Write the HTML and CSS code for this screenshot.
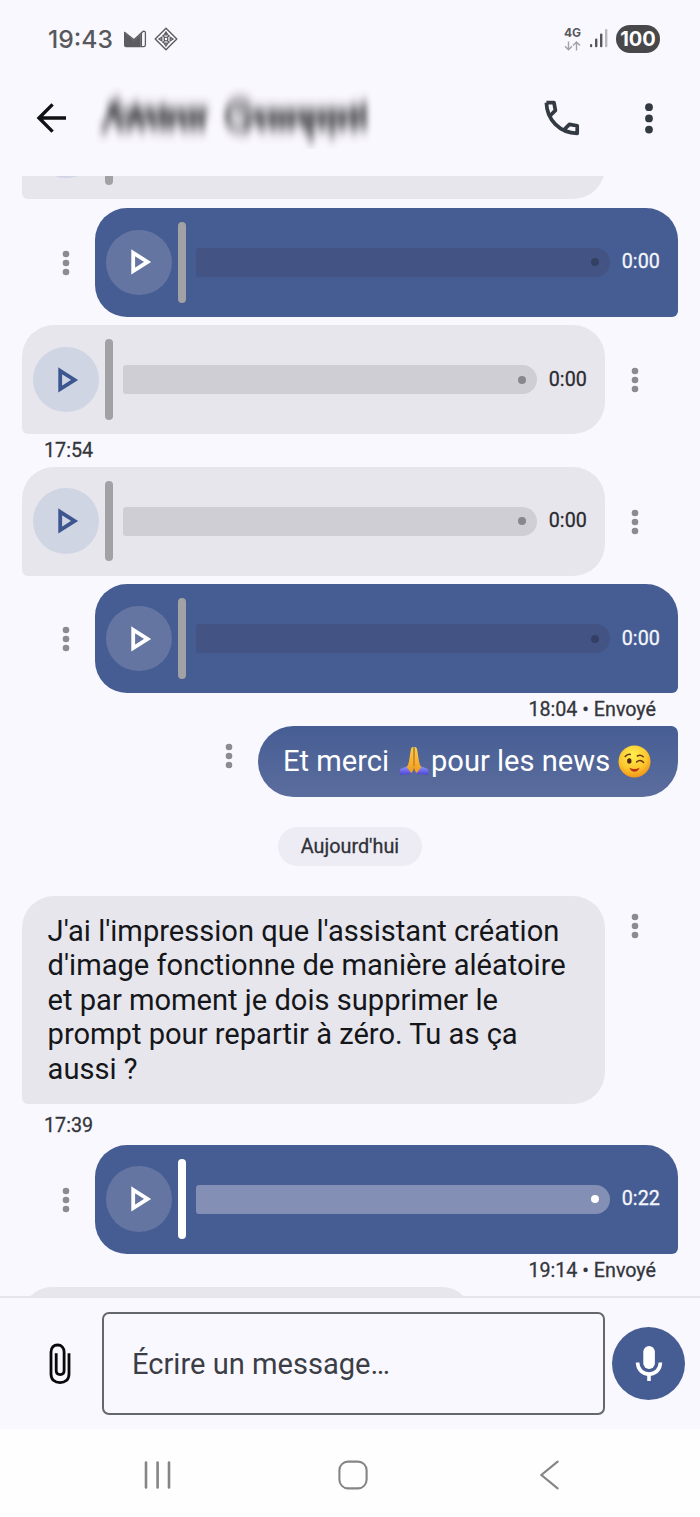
FILE: index.html
```
<!DOCTYPE html>
<html lang="fr">
<head>
<meta charset="utf-8">
<title>Messages</title>
<link rel="stylesheet" href="styles.css">
</head>
<body>
<svg width="0" height="0" class="defs">
  <defs>
    <symbol id="dots" viewBox="0 0 8 26"><circle cx="4" cy="4" r="3.3"/><circle cx="4" cy="13" r="3.3"/><circle cx="4" cy="22" r="3.3"/></symbol>
    <symbol id="play" viewBox="0 0 22 28"><path d="M3.2 4.8 L17.6 13.9 L3.2 23 Z" fill="none" stroke="currentColor" stroke-width="3.8"/></symbol>
  </defs>
</svg>
<div class="screen">
  <header class="status">
    <span class="clock">19:43</span>
    <svg class="mail" width="24" height="18" viewBox="0 0 24 18"><path d="M1 2.2 L11 10.5 L17.8 4.3 V17.3 H3 Q1 17.3 1 15.3 Z" fill="#5c5c61"/><path d="M1.2 2 L11 9.8 L20 1.4 Q22.4 0.8 22.4 3 V15 Q22.4 16.7 20.6 16.7 H18.4 V3" fill="none" stroke="#5c5c61" stroke-width="1.3"/></svg>
    <svg class="diamond" width="24" height="24" viewBox="0 0 24 24" fill="none" stroke="#5c5c61"><path d="M12 1.2 L22.8 12 L12 22.8 L1.2 12 Z" stroke-width="1.4" stroke-linejoin="round"/><path d="M12 5 L13.8 7.8 H10.2Z M12 19 L13.8 16.2 H10.2Z M5 12 L7.8 10.2 V13.8Z M19 12 L16.2 10.2 V13.8Z M8.6 8.2 L11 11 M15.4 8.2 L13 11 M8.6 15.8 L11 13 M15.4 15.8 L13 13 M12 9.5 V11 M12 13 V14.5 M9.5 12 H11 M13 12 H14.5" stroke-width="1.3"/></svg>
    <div class="net">
      <span class="g4">4G</span>
      <svg width="17" height="10" viewBox="0 0 17 10" fill="none" stroke="#a2a1a8" stroke-width="1.4"><path d="M4.5 0.5 V8.5 M1 5.2 L4.5 8.7 L8 5.2 M12.5 9.5 V1.2 M9 4.6 L12.5 1.1 L16 4.6"/></svg>
    </div>
    <svg class="signal" width="18" height="19" viewBox="0 0 18 19"><g fill="#55555a"><rect x="0" y="15" width="2.2" height="3.2" rx="1"/><rect x="5" y="9.5" width="2.4" height="8.7" rx="1"/><rect x="10" y="4.5" width="2.4" height="13.7" rx="1"/></g><rect x="15" y="0" width="2.4" height="18.2" rx="1" fill="#b9b8bf"/></svg>
    <span class="battery">100</span>
  </header>
  <div class="appbar">
    <svg class="back" width="31" height="30" viewBox="0 0 31 30" fill="none" stroke="#101114" stroke-width="3.4"><path d="M30 15 H3 M16.6 1.4 L3 15 L16.6 28.6"/></svg>
    <svg class="contact" width="290" height="62" viewBox="0 0 290 62">
      <defs><filter id="smudge" x="-10%" y="-50%" width="120%" height="200%" color-interpolation-filters="sRGB"><feGaussianBlur stdDeviation="3.4 6.5"/></filter></defs>
      <g filter="url(#smudge)" fill="none" stroke="#2a2a2d" stroke-width="4.6" opacity="0.9">
        <path d="M7 45 L24 12 M15 16 L27 44 M33 44 L41 21 L48 44 M53 20 L60 43 M68 18 V44 M76 22 V44 M85 22 L90 44 M98 21 V44 M107 21 V44 M12 24 H114 M20 33 H110"/>
        <path d="M155 17 Q136 9 132 28 Q132 44 152 42 V30 M162 22 L168 44 M178 22 V44 M187 23 V44 M196 22 V44 M206 22 L211 44 M216 22 V54 M227 22 V44 M237 21 V50 M247 22 V44 M259 18 V45 M269 15 V43 M140 25 H270 M152 34 H266"/>
      </g>
    </svg>
    <svg class="phone" width="36" height="36" viewBox="0 0 36 36" fill="none" stroke="#343a42" stroke-width="3.7" stroke-linejoin="round"><path d="M2.4 2.6 H10 L11.4 10.4 L6.6 15.2 M2.4 2.6 C2.8 20 16 33 33.2 33.4 V25.8 L25.4 24.4 L20.8 29"/></svg>
    <svg class="more" width="8" height="31" viewBox="0 0 8 31" fill="#343a42"><circle cx="4" cy="4.2" r="3.9"/><circle cx="4" cy="15.4" r="3.9"/><circle cx="4" cy="26.6" r="3.9"/></svg>
  </div>

  <main class="chat">
    <div class="row clipped">
      <div class="voice in"><i class="disc"></i><i class="needle"></i></div>
    </div>
    <div class="row out first">
      <svg class="kebab"><use href="#dots"/></svg>
      <div class="voice sent"><span class="disc"><svg><use href="#play"/></svg></span><i class="needle"></i><span class="track"><i></i></span><span class="len">0:00</span></div>
    </div>
    <div class="row">
      <div class="voice in"><span class="disc"><svg><use href="#play"/></svg></span><i class="needle"></i><span class="track"><i></i></span><span class="len">0:00</span></div>
      <svg class="kebab"><use href="#dots"/></svg>
    </div>
    <div class="meta">17:54</div>
    <div class="row">
      <div class="voice in"><span class="disc"><svg><use href="#play"/></svg></span><i class="needle"></i><span class="track"><i></i></span><span class="len">0:00</span></div>
      <svg class="kebab"><use href="#dots"/></svg>
    </div>
    <div class="row out">
      <svg class="kebab"><use href="#dots"/></svg>
      <div class="voice sent"><span class="disc"><svg><use href="#play"/></svg></span><i class="needle"></i><span class="track"><i></i></span><span class="len">0:00</span></div>
    </div>
    <div class="meta right">18:04 • Envoyé</div>
    <div class="row out textrow">
      <svg class="kebab"><use href="#dots"/></svg>
      <div class="bubble-sent">
        <span class="t1">Et merci</span>
        <svg class="pray" width="30" height="30" viewBox="0 0 30 30">
          <defs><linearGradient id="hand" x1="0" y1="0" x2="0" y2="1"><stop offset="0" stop-color="#fbd04a"/><stop offset="1" stop-color="#f39a1b"/></linearGradient><linearGradient id="cuff" x1="0" y1="0" x2="0" y2="1"><stop offset="0" stop-color="#8f9bf8"/><stop offset="1" stop-color="#4f3fd6"/></linearGradient></defs>
          <path d="M1 23 L9 20 L14 26 Q11 29.4 7 28 L1.4 29 Q0 25.5 1 23Z M29 23 L21 20 L16 26 Q19 29.4 23 28 L28.6 29 Q30 25.5 29 23Z" fill="url(#cuff)"/>
          <path d="M14.6 1 Q12.2 0.6 11.8 4 L10.2 14 Q9.6 18.4 7.8 21 L12.2 27 Q15 25 15 20Z" fill="url(#hand)"/>
          <path d="M15.4 1 Q17.8 0.6 18.2 4 L19.8 14 Q20.4 18.4 22.2 21 L17.8 27 Q15 25 15 20Z" fill="url(#hand)"/>
          <path d="M15 2 V20" stroke="#c66b12" stroke-width="1"/>
        </svg>
        <span class="t2">pour les news</span>
        <svg class="wink" width="33" height="33" viewBox="0 0 33 33">
          <defs><radialGradient id="face" cx=".45" cy=".3" r=".75"><stop offset="0" stop-color="#fff04f"/><stop offset=".6" stop-color="#fcc62d"/><stop offset="1" stop-color="#ef8a12"/></radialGradient></defs>
          <circle cx="16.5" cy="16.5" r="16" fill="url(#face)"/>
          <ellipse cx="11.3" cy="16" rx="2.2" ry="2.8" fill="#50280f"/>
          <path d="M7.2 11.5 Q9.5 8.7 12.3 9.4 M19.4 11 Q22.5 9.2 25.2 11.8 M18.6 17 Q22 13.6 25.6 17.4" fill="none" stroke="#6b3510" stroke-width="1.5" stroke-linecap="round"/>
          <path d="M11.4 22.8 Q16.5 25.2 21.6 22.8 Q20 26.7 16.5 26.7 Q13 26.7 11.4 22.8Z" fill="#b8321a"/>
        </svg>
      </div>
    </div>
    <div class="day">Aujourd'hui</div>
    <div class="row message">
      <div class="bubble-in">J'ai l'impression que l'assistant création<br>d'image fonctionne de manière aléatoire<br>et par moment je dois supprimer le<br>prompt pour repartir à zéro. Tu as ça<br>aussi ?</div>
      <svg class="kebab"><use href="#dots"/></svg>
    </div>
    <div class="meta">17:39</div>
    <div class="row out">
      <svg class="kebab"><use href="#dots"/></svg>
      <div class="voice sent ready"><span class="disc"><svg><use href="#play"/></svg></span><i class="needle"></i><span class="track"><i></i></span><span class="len">0:22</span></div>
    </div>
    <div class="meta right">19:14 • Envoyé</div>
    <div class="next"></div>
  </main>

  <footer class="composer">
    <svg class="clip" width="22" height="42" viewBox="0 0 22 42" fill="none" stroke="#08090b" stroke-width="2.8"><path d="M20 10.2 V31 C20 37 16 39.6 11 39.6 C6 39.6 2 37 2 31 V9 C2 4.6 4.8 2 8.6 2 C12.4 2 15.1 4.6 15.1 9 V27.6 C15.1 30.4 13.3 31.6 11.2 31.6 C9 31.6 7.2 30.4 7.2 27.6 V10.2"/></svg>
    <div class="field">Écrire un message…</div>
    <div class="mic"><svg width="28" height="37" viewBox="0 0 28 37"><rect x="8.3" y="1" width="11.6" height="23" rx="5.8" fill="#fff"/><path d="M2.6 17.6 C2.6 24.4 7.5 29 14 29 C20.5 29 25.4 24.4 25.4 17.6 M14 29 V36" fill="none" stroke="#fff" stroke-width="3.6"/></svg></div>
  </footer>
  <nav class="nav">
    <svg width="28" height="28" viewBox="0 0 28 28" stroke="#858585" stroke-width="2.6" stroke-linecap="round"><path d="M2 1.5 V26.5 M13.6 1.5 V26.5 M25 1.5 V26.5"/></svg>
    <svg class="home" width="30" height="30" viewBox="0 0 30 30" fill="none" stroke="#858585" stroke-width="2.1"><rect x="1.4" y="1.6" width="27.2" height="26.8" rx="8.6"/></svg>
    <svg width="19" height="30" viewBox="0 0 19 30" fill="none" stroke="#858585" stroke-width="2.1" stroke-linecap="round"><path d="M17.6 1.6 L1.4 15 L17.6 28.4"/></svg>
  </nav>
</div>
</body>
</html>
```
FILE: styles.css
```
* { box-sizing: border-box; }
body { margin: 0; background: #faf8ff; font-family: Roboto, "Liberation Sans", sans-serif; }
svg { display: block; flex: none; }
.defs { position: absolute; }
.screen { width: 700px; height: 1517px; display: flex; flex-direction: column; overflow: hidden; }

.status { height: 77px; display: flex; align-items: center; padding: 0 40px 0 48px; color: #58585c; }
.clock { font: 500 24.7px/30px Inter, Roboto, sans-serif; width: 65px; white-space: nowrap; }
.mail { margin-left: 10px; }
.diamond { margin-left: 7px; }
.net { margin-left: auto; width: 17px; display: flex; flex-direction: column; gap: 2px; }
.g4 { font: 700 12px/12px Inter, Roboto, sans-serif; }
.signal { margin-left: 9px; }
.battery { margin-left: 8px; width: 44px; height: 28px; border-radius: 14px; background: #48484b; color: #fff; font: 700 20px/28px Inter, Roboto, sans-serif; text-align: center; }

.appbar { height: 99px; display: flex; align-items: center; padding: 0 47px 17px 36px; }
.contact { margin-left: 28px; }
.phone { margin-left: auto; }
.more { margin-left: 65px; }

.chat { height: 1120px; overflow: hidden; display: flex; flex-direction: column; padding: 0 22px; }
.row { display: flex; flex: none; align-items: center; justify-content: space-between; gap: 25px; height: 109px; margin-bottom: 8.4px; }
.row + .meta { margin-top: -8.4px; }
.clipped { margin-top: -85.6px; }
.kebab { width: 8px; height: 26px; fill: #8b8b90; }
.row .kebab { margin: 1px 39px 0 0; }
.row.out .kebab { margin: 1px 0 0 40px; }
.voice { width: 583px; height: 109px; display: flex; align-items: center; padding: 0 0 0 11px; }
.voice.in { background: #e7e6ec; border-radius: 32px 32px 32px 6px; }
.voice.sent { background: #465d94; border-radius: 32px 32px 6px 32px; }
.disc { width: 65.5px; height: 65.5px; border-radius: 50%; display: flex; align-items: center; background: #d0d5e4; color: #3d5690; }
.disc svg { width: 22px; height: 28px; margin-left: 24px; }
.sent .disc { background: #6575a1; color: #fff; }
.needle { width: 7.5px; height: 80.5px; border-radius: 4px; background: #a2a1a6; margin: 0 10px 0 6.8px; }
.track { width: 414px; height: 29px; border-radius: 3px 15px 15px 3px; background: #cfced4; display: flex; align-items: center; justify-content: flex-end; padding-right: 10.5px; }
.track i { width: 8px; height: 8px; border-radius: 50%; background: #88878c; }
.sent .track { background: #435484; }
.sent .track i { background: #344063; }
.ready .needle { background: #fff; }
.ready .track { background: #838fb4; }
.ready .track i { background: #fff; }
.len { margin: 0 0 0 12px; font: 400 19.7px/24px Roboto, sans-serif; -webkit-text-stroke: 0.3px currentColor; color: #2a2c31; }
.sent .len { color: #f5f6fb; }
.meta { height: 32.5px; flex: none; padding-left: 22px; font: 400 19.7px/33px Roboto, sans-serif; -webkit-text-stroke: 0.3px currentColor; color: #33363b; }
.meta.right { text-align: right; padding: 0 22px 0 0; height: 33px; }

.row.textrow { height: 71px; justify-content: flex-end; margin-bottom: 30px; }
.row.textrow .kebab { margin: -12px 0 0; }
.bubble-sent { width: 420px; height: 71px; border-radius: 36px 7px 36px 36px; background: linear-gradient(#465d94, #5b6d9d); color: #fff; display: flex; align-items: center; padding: 0 0 1px 25px; font-size: 29.1px; white-space: nowrap; }
.t1 { width: 107px; }
.pray { margin-left: 9px; }
.t2 { width: 180px; margin-left: 2px; }
.wink { margin: 1px 0 0 7px; }
.day { align-self: center; flex: none; width: 144px; height: 39px; border-radius: 20px; background: #edecf5; color: #303238; font: 400 19.8px/39px Roboto, sans-serif; -webkit-text-stroke: 0.3px currentColor; text-align: center; margin-bottom: 29.6px; }
.row.message { height: 208px; align-items: flex-start; }
.row.message .kebab { margin-top: 17px; }
.bubble-in { width: 583px; height: 208px; padding: 18px 26px 18px 25.6px; border-radius: 32px 32px 32px 6px; background: #e7e6ec; color: #15161a; font-size: 29.1px; line-height: 34.5px; white-space: nowrap; }
.row.message + .meta { line-height: 43px; height: 41px; }
.next { flex: none; width: 450px; height: 60px; border-radius: 36px; background: #e7e6ec; }

.composer { height: 133px; border-top: 2px solid #e6e5eb; display: flex; align-items: center; padding: 0 15px 0 49px; }
.clip { margin-top: 1px; }
.field { margin-left: 31px; width: 503px; height: 103px; border: 2px solid #64676c; border-radius: 7px; padding-left: 28px; font-size: 29.1px; line-height: 100px; color: #3b3e46; white-space: nowrap; }
.mic { margin-left: auto; width: 73px; height: 73px; border-radius: 50%; background: #465d94; display: flex; align-items: center; justify-content: center; }
.nav { height: 88px; background: #fefefe; display: flex; align-items: center; justify-content: space-between; padding: 4px 141px 0 144px; }
.home { margin-right: 6px; }
```
